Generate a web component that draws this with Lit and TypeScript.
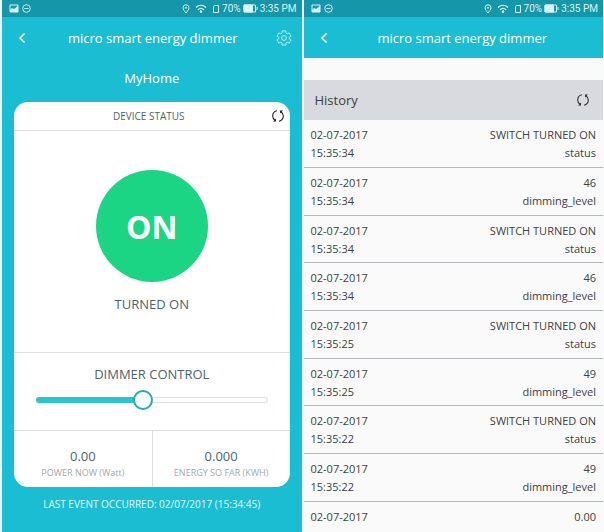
import { LitElement, html, css, nothing } from "lit";
import { customElement, property, state } from "lit/decorators.js";

interface HistoryEvent {
  date: string;
  time?: string;
  value: string;
  field?: string;
}

const EVENTS: HistoryEvent[] = [
  { date: "02-07-2017", time: "15:35:34", value: "SWITCH TURNED ON", field: "status" },
  { date: "02-07-2017", time: "15:35:34", value: "46", field: "dimming_level" },
  { date: "02-07-2017", time: "15:35:34", value: "SWITCH TURNED ON", field: "status" },
  { date: "02-07-2017", time: "15:35:34", value: "46", field: "dimming_level" },
  { date: "02-07-2017", time: "15:35:25", value: "SWITCH TURNED ON", field: "status" },
  { date: "02-07-2017", time: "15:35:25", value: "49", field: "dimming_level" },
  { date: "02-07-2017", time: "15:35:22", value: "SWITCH TURNED ON", field: "status" },
  { date: "02-07-2017", time: "15:35:22", value: "49", field: "dimming_level" },
  { date: "02-07-2017", value: "0.00" },
];

const shared = css`
  :host {
    display: block;
    font-family: "Open Sans", "Noto Sans", sans-serif;
  }
  * {
    box-sizing: border-box;
  }
  button {
    display: flex;
    align-items: center;
    justify-content: center;
    padding: 0;
    border: 0;
    background: none;
    color: inherit;
    font: inherit;
    cursor: pointer;
  }
  svg {
    display: block;
    fill: none;
    stroke: currentColor;
  }
`;

const gearPath = (() => {
  const teeth = 6;
  const points: string[] = [];
  for (let i = 0; i < teeth; i++) {
    const a = (i * 2 * Math.PI) / teeth - Math.PI / 2;
    for (const [offset, r] of [[-0.38, 5.3], [-0.26, 7.3], [0.26, 7.3], [0.38, 5.3]]) {
      points.push(`${(8 + r * Math.cos(a + offset)).toFixed(2)} ${(8 + r * Math.sin(a + offset)).toFixed(2)}`);
    }
  }
  return `M${points.join("L")}Z`;
})();

const gearIcon = html`<svg width="16" height="16" viewBox="0 0 16 16" stroke-linejoin="round">
  <path d=${gearPath} /><circle cx="8" cy="8" r="2.4" />
</svg>`;

const refreshIcon = html`<svg width="14" height="14" viewBox="0 0 14 14" stroke-width="1.1">
  <path d="M6 1.800C3.600 2.300 1.700 4.500 1.700 7c0 1.700.9 3.300 2.300 4.300M8 12.200c2.400-.5 4.300-2.700 4.300-5.200 0-1.700-.9-3.300-2.300-4.300" />
  <path d="M5 9.600v3H2zM9 4.400v-3h3z" fill="currentColor" stroke="none" />
</svg>`;

@customElement("status-bar")
class StatusBar extends LitElement {
  static styles = [
    shared,
    css`
      .bar {
        display: flex;
        align-items: center;
        gap: 5px;
        height: 17px;
        padding: 0 5px 0 7px;
        background: #1697a9;
        color: #d9f4f8;
        font: 10px/17px Roboto, "Liberation Sans", sans-serif;
        white-space: nowrap;
      }
      .left {
        display: flex;
        gap: 3px;
        margin-right: auto;
      }
      .group {
        display: flex;
        align-items: center;
        gap: 2px;
      }
    `,
  ];

  render() {
    return html`<div class="bar">
      <span class="left">
        <svg width="10" height="9" viewBox="0 0 10 9">
          <path d="M1 1h8v7H1z" />
          <path d="M1 8V6l2-2 2 1 4-3v6z" fill="currentColor" stroke="none" />
        </svg>
        <svg width="9" height="9" viewBox="0 0 9 9" stroke-width=".9">
          <circle cx="4.500" cy="4.500" r="3.800" /><path d="M2.300 4.500h4.400" />
        </svg>
      </span>
      <svg width="8" height="10" viewBox="0 0 8 10">
        <path d="M4 9C2.500 7 1 5.500 1 3.800a3 3 0 0 1 6 0C7 5.500 5.500 7 4 9z" /><circle cx="4" cy="3.800" r=".6" />
      </svg>
      <svg width="12" height="9" viewBox="0 0 12 9" stroke-width="1.200">
        <path d="M1 3.500c3-3 7-3 10 0M3 5.700c2-1.900 4-1.900 6 0" /><circle cx="6" cy="7.600" r=".7" fill="currentColor" />
      </svg>
      <span class="group">
        <svg width="8" height="10" viewBox="0 0 8 10"><path d="M2.500 1.500h4v7h-5v-6z" /></svg>
        <span>70%</span>
        <svg width="15" height="9" viewBox="0 0 15 9">
          <path d="M1 1h11.500v7H1z" /><path d="M1 1h8.500v7H1z" fill="currentColor" /><path d="M14 3v3" />
        </svg>
        <span>3:35 PM</span>
      </span>
    </div>`;
  }
}

@customElement("title-bar")
class TitleBar extends LitElement {
  @property() heading = "";
  @property({ type: Boolean }) settings = false;

  static styles = [
    shared,
    css`
      .bar {
        display: grid;
        grid-template-columns: 32px 1fr 16px;
        align-items: center;
        height: 41px;
        padding: 0 2px 0 4px;
        background: #1bbdd3;
        color: #fff;
      }
      .with-settings {
        grid-template-columns: 32px 1fr 32px;
      }
      .title {
        margin: 0;
        font-size: 13px;
        line-height: 20px;
        font-weight: 500;
        text-align: center;
        white-space: nowrap;
      }
      .icon {
        height: 32px;
      }
      .gear {
        color: #b4eef5;
      }
    `,
  ];

  render() {
    return html`<header class="bar ${this.settings ? "with-settings" : ""}">
      <button class="icon" aria-label="Back">
        <svg width="8" height="12" viewBox="0 0 8 12" stroke-width="1.600"><path d="M6.500 1.500 2 6l4.500 4.500" /></svg>
      </button>
      <h1 class="title">${this.heading}</h1>
      ${this.settings ? html`<button class="icon gear" aria-label="Settings">${gearIcon}</button>` : nothing}
    </header>`;
  }
}

@customElement("device-screen")
class DeviceScreen extends LitElement {
  @state() private level = 46;

  static styles = [
    shared,
    css`
      :host {
        background: #1bbdd3;
        color: #fff;
      }
      .home {
        margin: 10px 0 14px;
        font-size: 13px;
        line-height: 20px;
        font-weight: 400;
        text-align: center;
      }
      .card {
        margin: 0 12px;
        border-radius: 14px;
        background: #fff;
        color: #4d6470;
        text-align: center;
        overflow: hidden;
      }
      .head {
        display: grid;
        grid-template-columns: 18px 1fr 24px;
        align-items: center;
        height: 29px;
        border-bottom: 1px solid #dcdfe0;
      }
      .head-title {
        grid-column: 2;
        margin: 0;
        font-size: 10px;
        line-height: 16px;
        font-weight: 400;
      }
      .refresh {
        height: 24px;
        color: #222;
      }
      .status {
        display: flex;
        flex-direction: column;
        align-items: center;
        gap: 12px;
        padding: 39px 0 38px;
        border-bottom: 1px solid #dcdfe0;
      }
      .power {
        width: 112px;
        height: 112px;
        border-radius: 50%;
        background: #1bd585;
        color: #fff;
        font-size: 32px;
        font-weight: 700;
      }
      .state {
        margin: 0;
        font-size: 13px;
        line-height: 20px;
        font-weight: 500;
      }
      .dimmer {
        display: flex;
        flex-direction: column;
        gap: 6px;
        padding: 11px 22px 20px;
        border-bottom: 1px solid #dcdfe0;
      }
      .dimmer-label {
        font-size: 13px;
        line-height: 20px;
      }
      .slider {
        appearance: none;
        width: 100%;
        height: 20px;
        margin: 0;
        background: none;
      }
      .slider::-webkit-slider-runnable-track {
        height: 6px;
        border: 1px solid transparent;
        border-radius: 3px;
        background:
          linear-gradient(to right, #2cc5cb var(--level), transparent var(--level)) border-box,
          linear-gradient(#fff, #fff) padding-box,
          linear-gradient(#dcdfe0, #dcdfe0) border-box;
      }
      .slider::-webkit-slider-thumb {
        appearance: none;
        width: 20px;
        height: 20px;
        margin-top: -8px;
        border: 2px solid #26a9b3;
        border-radius: 50%;
        background: #fff;
      }
      .stats {
        display: grid;
        grid-template-columns: 1fr 1fr;
        margin: 0;
      }
      .stat {
        display: flex;
        flex-direction: column-reverse;
        padding: 16px 0 6px;
      }
      .stat + .stat {
        border-left: 1px solid #dcdfe0;
      }
      .value {
        margin: 0;
        font-size: 13px;
        line-height: 18px;
        font-weight: 500;
      }
      .name {
        color: #a3a8ab;
        font-size: 9px;
        line-height: 16px;
      }
      .last {
        margin: 9px 0;
        font-size: 10px;
        line-height: 16px;
        text-align: center;
        color: #e2f8fb;
      }
    `,
  ];

  private onSlide(e: Event) {
    this.level = Number((e.target as HTMLInputElement).value);
  }

  render() {
    return html`
      <status-bar></status-bar>
      <title-bar heading="micro smart energy dimmer" settings></title-bar>
      <h2 class="home">MyHome</h2>
      <section class="card">
        <div class="head">
          <h3 class="head-title">DEVICE STATUS</h3>
          <button class="refresh" aria-label="Refresh status">${refreshIcon}</button>
        </div>
        <div class="status">
          <button class="power">ON</button>
          <p class="state">TURNED ON</p>
        </div>
        <div class="dimmer">
          <label class="dimmer-label" for="level">DIMMER CONTROL</label>
          <input id="level" class="slider" type="range" min="0" max="100" .value=${String(this.level)}
            style="--level: ${this.level}%" @input=${this.onSlide} />
        </div>
        <dl class="stats">
          <div class="stat"><dt class="name">POWER NOW (Watt)</dt><dd class="value">0.00</dd></div>
          <div class="stat"><dt class="name">ENERGY SO FAR (KWH)</dt><dd class="value">0.000</dd></div>
        </dl>
      </section>
      <p class="last">LAST EVENT OCCURRED: 02/07/2017 (15:34:45)</p>
    `;
  }
}

@customElement("history-screen")
class HistoryScreen extends LitElement {
  static styles = [
    shared,
    css`
      :host {
        background: #fafafa;
        color: #404040;
      }
      .head {
        display: flex;
        align-items: center;
        justify-content: space-between;
        height: 40px;
        margin-top: 22px;
        padding: 0 8px 0 11px;
        background: #d9dadf;
      }
      .title {
        margin: 0;
        font-size: 13px;
        line-height: 20px;
        font-weight: 400;
      }
      .refresh {
        width: 24px;
        height: 24px;
        color: #333;
      }
      .events {
        width: 100%;
        border-collapse: separate;
        border-spacing: 0;
        font-size: 11px;
        line-height: 18px;
      }
      .cell {
        padding: 6px 7px 5px;
        border-bottom: 1px solid #b7b7be;
      }
      .row:nth-child(3n + 3) .cell {
        padding-bottom: 4px;
      }
      .row:last-child .cell {
        border-bottom: 0;
      }
      .end {
        text-align: right;
      }
      .line {
        display: block;
      }
    `,
  ];

  render() {
    return html`
      <status-bar></status-bar>
      <title-bar heading="micro smart energy dimmer"></title-bar>
      <div class="head">
        <h2 class="title">History</h2>
        <button class="refresh" aria-label="Refresh history">${refreshIcon}</button>
      </div>
      <table class="events" aria-label="History">
        <tbody>
          ${EVENTS.map(
            (e) => html`<tr class="row">
              <td class="cell">
                <span class="line">${e.date}</span>${e.time ? html`<span class="line">${e.time}</span>` : nothing}
              </td>
              <td class="cell end">
                <span class="line">${e.value}</span>${e.field ? html`<span class="line">${e.field}</span>` : nothing}
              </td>
            </tr>`
          )}
        </tbody>
      </table>
    `;
  }
}

@customElement("app-root")
class AppRoot extends LitElement {
  static styles = css`
    :host {
      display: block;
      background: #f3fdff;
    }
    .screens {
      display: grid;
      grid-template-columns: 1fr 1fr;
      gap: 2px;
      min-height: 100vh;
      padding: 0 1px 0 2px;
      box-sizing: border-box;
    }
  `;

  render() {
    return html`<main class="screens">
      <device-screen></device-screen>
      <history-screen></history-screen>
    </main>`;
  }
}
